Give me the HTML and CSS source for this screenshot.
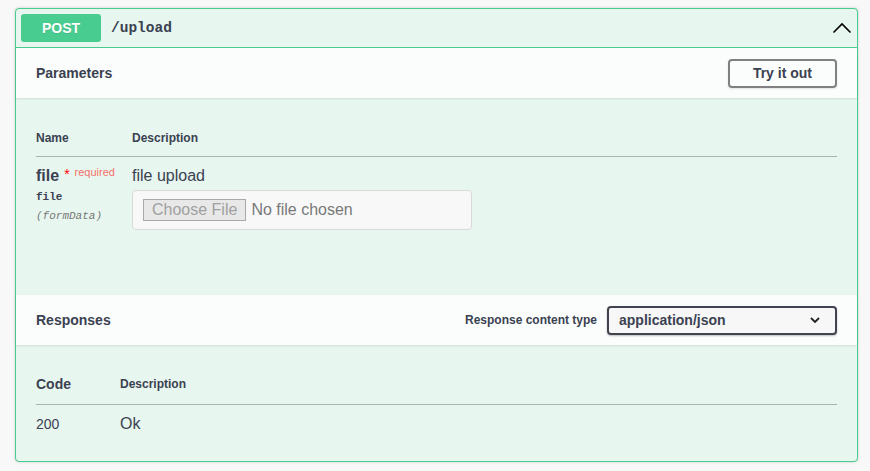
FILE: index.html
```html
<!DOCTYPE html>
<html lang="en">
<head>
<meta charset="utf-8">
<title>POST /upload</title>
<link rel="stylesheet" href="styles.css">
</head>
<body>
<div class="page">
  <div class="opblock">
    <div class="summary">
      <span class="method">POST</span>
      <span class="path">/upload</span>
      <svg class="collapse" width="20" height="20" viewBox="0 0 20 20"><polyline points="1.5,14.5 10,6 18.5,14.5" fill="none" stroke="#000" stroke-width="1.6"/></svg>
    </div>

    <div class="section-header">
      <h4>Parameters</h4>
      <button class="try-btn" type="button">Try it out</button>
    </div>
    <div class="params-body">
      <table class="ptable">
        <thead>
          <tr><th class="col-name">Name</th><th>Description</th></tr>
        </thead>
        <tbody>
          <tr>
            <td class="col-name">
              <div class="pname">file<span class="star">*</span><span class="req">required</span></div>
              <div class="ptype">file</div>
              <div class="pin">(formData)</div>
            </td>
            <td>
              <div class="pdesc">file upload</div>
              <div class="file-input"><span class="choose">Choose File</span><span class="nofile">No file chosen</span></div>
            </td>
          </tr>
        </tbody>
      </table>
    </div>

    <div class="section-header">
      <h4>Responses</h4>
      <span class="ct-label">Response content type</span>
      <div class="select"><span>application/json</span><svg width="10" height="6" viewBox="0 0 10 6"><polyline points="1,1 5,5 9,1" fill="none" stroke="#222" stroke-width="1.8"/></svg></div>
    </div>
    <div class="resp-body">
      <table class="rtable">
        <thead>
          <tr><th class="col-code">Code</th><th class="col-desc">Description</th></tr>
        </thead>
        <tbody>
          <tr><td class="code">200</td><td class="rdesc">Ok</td></tr>
        </tbody>
      </table>
    </div>
  </div>
</div>
</body>
</html>
```

FILE: styles.css
```css
html, body {
  margin: 0;
  padding: 0;
  background: #f8f8f8;
}
body {
  font-family: "Liberation Sans", Arial, sans-serif;
  color: #3b4151;
}
.page {
  padding: 8px 12px 8px 15px;
}
.opblock {
  border: 1px solid #49cc90;
  border-radius: 4px;
  background: #e7f6ef;
  box-shadow: 0 0 3px rgba(0,0,0,.19);
}
.summary {
  display: flex;
  align-items: center;
  padding: 5px;
  border-bottom: 1px solid #49cc90;
}
.method {
  box-sizing: border-box;
  min-width: 80px;
  padding: 6px 15px;
  border-radius: 3px;
  background: #49cc90;
  color: #fff;
  font-size: 14px;
  font-weight: 700;
  line-height: 16px;
  text-align: center;
  text-shadow: 0 1px 0 rgba(0,0,0,.1);
}
.path {
  flex: 1;
  padding: 0 10px;
  font-family: "Liberation Mono", monospace;
  font-size: 14.5px;
  font-weight: 700;
  color: #3b4151;
}
.collapse {
  display: block;
}
.section-header {
  display: flex;
  align-items: center;
  min-height: 50px;
  box-sizing: border-box;
  padding: 8px 20px;
  background: rgba(255,255,255,.8);
  box-shadow: 0 1px 2px rgba(0,0,0,.1);
}
.section-header h4 {
  flex: 1;
  margin: 0;
  font-size: 14px;
  font-weight: 700;
  color: #3b4151;
}
.try-btn {
  font-family: "Liberation Sans", Arial, sans-serif;
  font-size: 14px;
  font-weight: 700;
  color: #3b4151;
  line-height: 15px;
  padding: 5px 23px;
  background: transparent;
  border: 2px solid #808080;
  border-radius: 4px;
  box-shadow: 0 1px 2px rgba(0,0,0,.1);
}
.params-body {
  padding: 21px 20px 50px;
}
.resp-body {
  padding: 19px 20px 18px;
}
table {
  width: 100%;
  border-collapse: collapse;
}
th {
  text-align: left;
  font-size: 12px;
  font-weight: 700;
  padding: 12px 0 11px;
  border-bottom: 1px solid #aab3ae;
  color: #3b4151;
}
td {
  vertical-align: top;
  padding: 10px 0;
}
.ptable .col-name {
  width: 96px;
}
.pname {
  font-size: 16px;
  font-weight: 700;
  line-height: 18px;
}
.star {
  color: #ff0000;
  font-size: 14px;
  font-weight: 400;
  margin-left: 5px;
  position: relative;
  top: -2px;
}
.req {
  font-size: 11px;
  font-weight: 400;
  color: rgba(255,0,0,.6);
  position: relative;
  top: -5px;
  padding-left: 5px;
}
.ptype {
  font-family: "Liberation Mono", monospace;
  font-size: 11px;
  font-weight: 700;
  padding: 5px 0 7px;
}
.pin {
  font-family: "Liberation Mono", monospace;
  font-size: 11px;
  font-style: italic;
  color: #777777;
}
.pdesc {
  font-size: 16px;
  line-height: 18px;
}
.file-input {
  box-sizing: border-box;
  width: 340px;
  height: 40px;
  margin: 5px 0;
  padding: 0 10px;
  display: flex;
  align-items: center;
  gap: 5px;
  background: #f8f8f8;
  border: 1px solid #d9d9d9;
  border-radius: 4px;
  font-size: 16px;
}
.choose {
  padding: 1px 8px;
  background: #e8e8e8;
  border: 1px solid #aaaaaa;
  color: #a0a0a0;
  line-height: 18px;
}
.nofile {
  color: #787878;
}
.ct-label {
  font-size: 12px;
  font-weight: 700;
  margin-right: 10px;
}
.select {
  box-sizing: border-box;
  width: 230px;
  height: 29px;
  display: flex;
  align-items: center;
  justify-content: space-between;
  padding: 0 15px 0 10px;
  border: 2px solid #41444e;
  border-radius: 4px;
  background: #f7f7f7;
  box-shadow: 0 1px 2px rgba(0,0,0,.25);
  font-size: 14px;
  font-weight: 700;
}
.select svg {
  display: block;
}
.rtable th {
  padding-bottom: 12px;
}
.rtable .col-code {
  width: 84px;
  font-size: 14px;
}
.code {
  font-size: 14px;
  line-height: 16px;
  padding-top: 11px;
}
.rdesc {
  font-size: 16px;
  line-height: 18px;
}
```
